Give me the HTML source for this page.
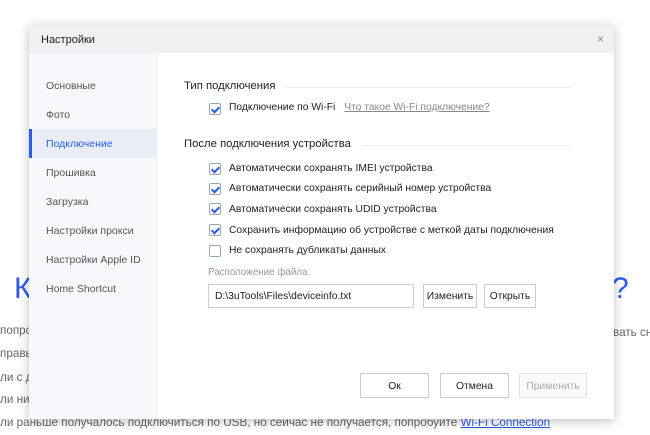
<!DOCTYPE html>
<html><head><meta charset="utf-8"><style>
*{margin:0;padding:0;box-sizing:border-box}
body{width:650px;height:435px;overflow:hidden;background:#fff;font-family:"Liberation Sans","DejaVu Sans",sans-serif;position:relative;color:#333}
.abs{position:absolute;white-space:nowrap}
.bg{font-size:11.7px;color:#666}
#dlg{position:absolute;left:29px;top:25px;width:585px;height:394px;background:#fff;box-shadow:0 2px 10px rgba(0,0,0,.25)}
#title{position:absolute;left:0;top:0;width:100%;height:28px;background:#f0f0f0;font-size:11px;color:#222;padding:9px 0 0 12px}
#side{position:absolute;left:0;top:28px;width:128px;bottom:0;background:#f7f8fc;border-right:1px solid #eceef3}
.it{position:absolute;left:17px;font-size:10.5px;color:#555}
.sel{position:absolute;left:0;top:76px;width:128px;height:29px;background:#e9edf8;border-left:3px solid #2a5ce8}
.cb{position:absolute;width:12px;height:12px;border:1px solid #9aa;border-radius:2px;background:#fff}
.cb.on::after{content:"";position:absolute;left:3px;top:1px;width:3px;height:6px;border:solid #2a5ce8;border-width:0 2px 2px 0;transform:rotate(45deg)}
.t{font-size:10.3px;color:#222}
.btn{position:absolute;border:1px solid #ccc;background:#fff;font-size:10.3px;color:#222;text-align:center}
</style></head><body>
<div class="abs" style="left:14px;top:272px;font-size:30px;color:#2a5ce8">К</div>
<div class="abs" style="left:612px;top:272px;font-size:30px;color:#2a5ce8">?</div>
<div class="abs bg" style="left:0;top:324px">попроб</div>
<div class="abs bg" style="left:0;top:347px">правь</div>
<div class="abs bg" style="left:0;top:371px">ли с д</div>
<div class="abs bg" style="left:0;top:393px">ли нич</div>
<div class="abs bg" style="left:0;top:416px">ли раньше получалось подключиться по USB, но сейчас не получается, попробуйте <span style="color:#2a5ce8;text-decoration:underline">Wi-Fi Connection</span></div>
<div class="abs bg" style="left:613px;top:326px">вать сн</div>
<div id="dlg">
<div id="title">Настройки<span style="position:absolute;right:10px;top:7px;color:#888;font-size:12px">×</span></div>
<div id="side">
<div class="sel"></div>
<div class="it" style="top:27px">Основные</div>
<div class="it" style="top:56px">Фото</div>
<div class="it" style="top:85px;color:#2a5ce8">Подключение</div>
<div class="it" style="top:114px">Прошивка</div>
<div class="it" style="top:143px">Загрузка</div>
<div class="it" style="top:172px">Настройки прокси</div>
<div class="it" style="top:201px">Настройки Apple ID</div>
<div class="it" style="top:230px">Home Shortcut</div>
</div>
</div>
<div class="abs t" style="left:184px;top:80px;font-size:11.3px">Тип подключения</div>
<div class="abs" style="left:286px;top:87px;width:285px;border-top:1px solid #eee"></div>
<div class="cb on" style="left:209px;top:103px"></div>
<div class="abs t" style="left:229px;top:102px">Подключение по Wi-Fi <span style="color:#888;text-decoration:underline;margin-left:6px">Что такое Wi-Fi подключение?</span></div>
<div class="abs t" style="left:184px;top:138px;font-size:11.3px">После подключения устройства</div>
<div class="abs" style="left:362px;top:145px;width:209px;border-top:1px solid #eee"></div>
<div class="cb on" style="left:209px;top:163px"></div><div class="abs t" style="left:229px;top:163px">Автоматически сохранять IMEI устройства</div>
<div class="cb on" style="left:209px;top:183px"></div><div class="abs t" style="left:229px;top:183px">Автоматически сохранять серийный номер устройства</div>
<div class="cb on" style="left:209px;top:203px"></div><div class="abs t" style="left:229px;top:204px">Автоматически сохранять UDID устройства</div>
<div class="cb on" style="left:209px;top:224px"></div><div class="abs t" style="left:229px;top:225px">Сохранить информацию об устройстве с меткой даты подключения</div>
<div class="cb" style="left:209px;top:245px"></div><div class="abs t" style="left:229px;top:245px">Не сохранять дубликаты данных</div>
<div class="abs" style="left:208px;top:267px;font-size:9.8px;color:#999">Расположение файла:</div>
<div class="btn" style="left:208px;top:284px;width:206px;height:24px;text-align:left;padding:6px 0 0 6px">D:\3uTools\Files\deviceinfo.txt</div>
<div class="btn" style="left:423px;top:284px;width:54px;height:24px;padding-top:6px">Изменить</div>
<div class="btn" style="left:484px;top:284px;width:52px;height:24px;padding-top:6px">Открыть</div>
<div class="btn" style="left:360px;top:373px;width:69px;height:25px;padding-top:7px">Ок</div>
<div class="btn" style="left:440px;top:373px;width:69px;height:25px;padding-top:7px">Отмена</div>
<div class="btn" style="left:519px;top:373px;width:68px;height:25px;padding-top:7px;color:#aaa;border-color:#e2e2e2;background:#fafafa">Применить</div>
</body></html>
